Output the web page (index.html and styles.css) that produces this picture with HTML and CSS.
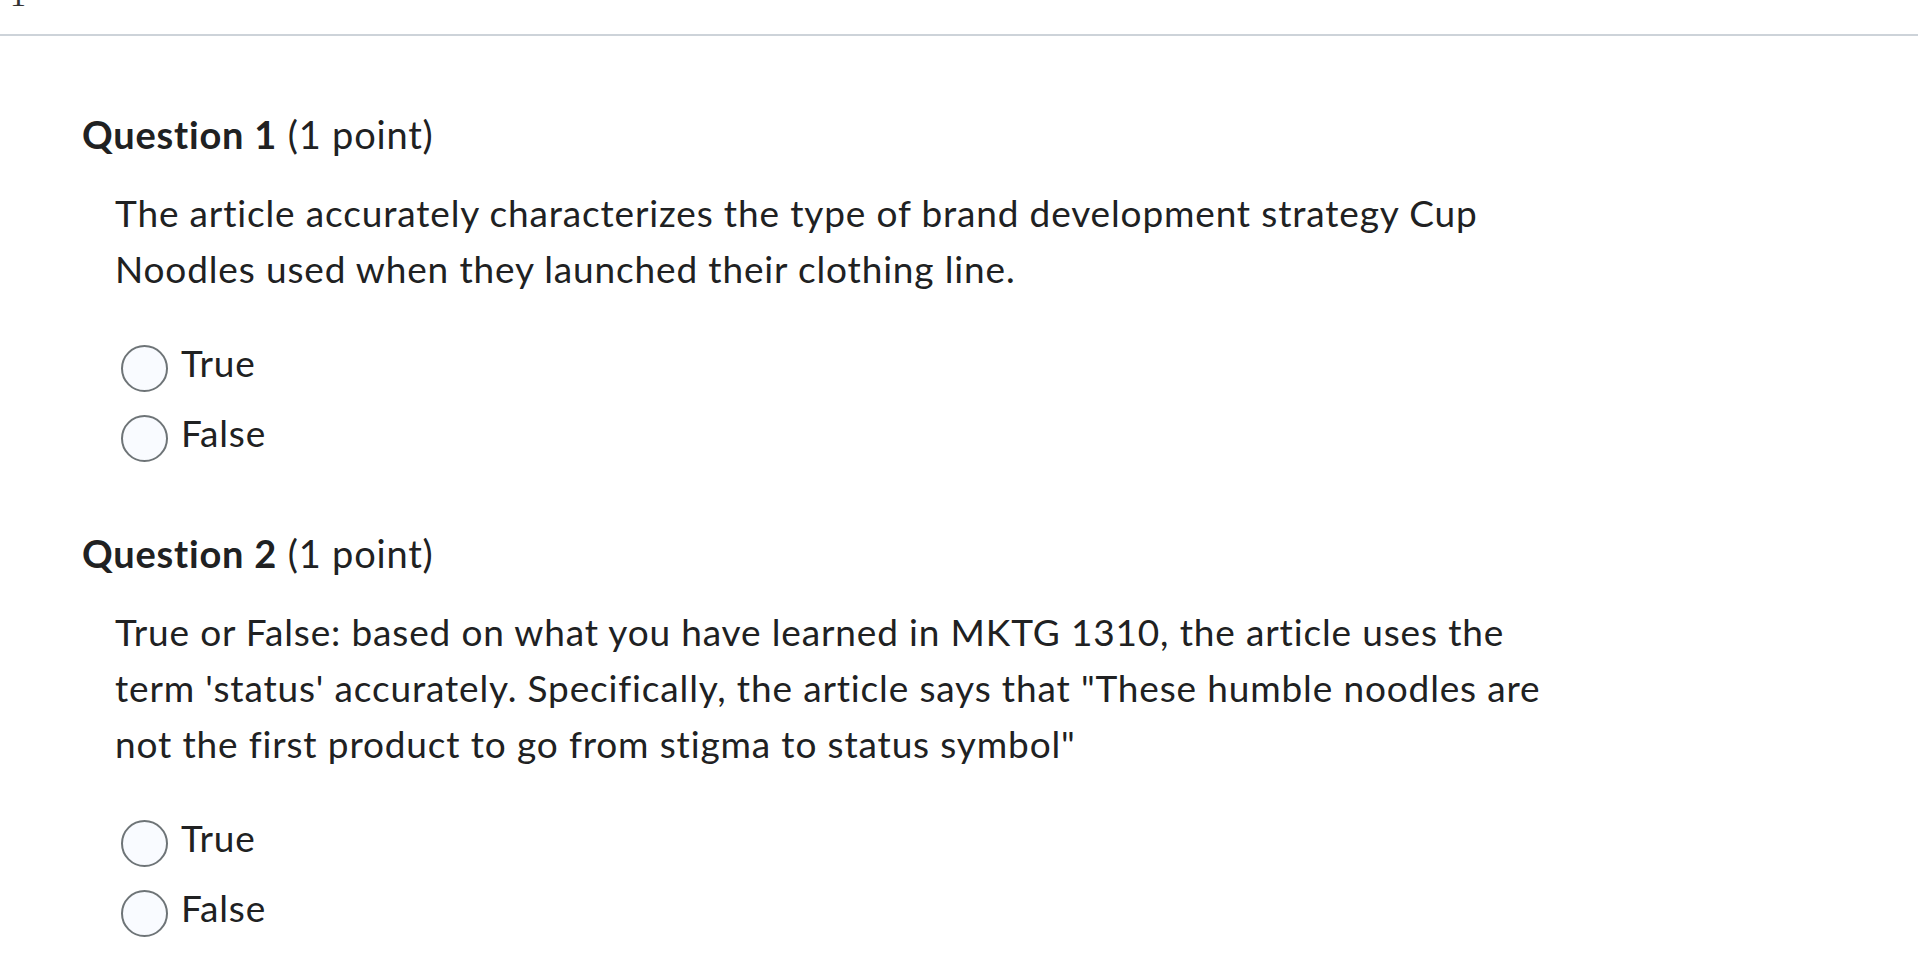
FILE: index.html
```html
<!DOCTYPE html>
<html lang="en">
<head>
<meta charset="utf-8">
<title>Quiz</title>
<link rel="stylesheet" href="styles.css">
</head>
<body>
<div class="topbar"><span class="page-num">1</span></div>
<main class="quiz">
  <section class="question">
    <h2 class="q-title"><strong>Question 1</strong> (1 point)</h2>
    <div class="q-body">
      <p class="q-text">The article accurately characterizes the type of brand development strategy Cup Noodles used when they launched their clothing line.</p>
      <div class="options">
        <label class="opt"><input type="radio" name="q1" class="radio"><span>True</span></label>
        <label class="opt"><input type="radio" name="q1" class="radio"><span>False</span></label>
      </div>
    </div>
  </section>
  <section class="question">
    <h2 class="q-title"><strong>Question 2</strong> (1 point)</h2>
    <div class="q-body">
      <p class="q-text">True or False: based on what you have learned in MKTG 1310, the article uses the term 'status' accurately. Specifically, the article says that "These humble noodles are not the first product to go from stigma to status symbol"</p>
      <div class="options">
        <label class="opt"><input type="radio" name="q2" class="radio"><span>True</span></label>
        <label class="opt"><input type="radio" name="q2" class="radio"><span>False</span></label>
      </div>
    </div>
  </section>
</main>
</body>
</html>
```
FILE: styles.css
```css
html, body {
  margin: 0;
  padding: 0;
  background: #ffffff;
}
body {
  font-family: Lato, "Open Sans", sans-serif;
  color: #202122;
  overflow: hidden;
}
.topbar {
  height: 34px;
  border-bottom: 2px solid #cdd3d9;
  overflow: hidden;
}
.page-num {
  display: block;
  font-family: "Liberation Serif", serif;
  font-size: 32px;
  line-height: 32px;
  margin-top: -21px;
  padding-left: 10px;
  color: #333;
}
.quiz {
  padding-left: 82px;
  padding-top: 77px;
}
.question {
  margin-bottom: 70px;
}
.q-title {
  margin: 0;
  font-size: 38px;
  line-height: 42px;
  font-weight: 400;
  letter-spacing: 0.8px;
}
.q-title strong {
  font-weight: 700;
}
.q-body {
  padding-left: 33px;
  padding-top: 30px;
  width: 1460px;
}
.q-text {
  margin: 0;
  font-size: 37px;
  line-height: 56px;
  letter-spacing: 0.85px;
}
.options {
  padding-top: 38px;
  display: flex;
  flex-direction: column;
  gap: 13px;
}
.opt {
  display: flex;
  align-items: flex-start;
  font-size: 37px;
  line-height: 56px;
  letter-spacing: 0.8px;
}
.radio {
  appearance: none;
  -webkit-appearance: none;
  box-sizing: border-box;
  width: 47px;
  height: 47px;
  margin: 10px 13px 0 6px;
  border: 2px solid #6e7477;
  border-radius: 50%;
  background: #f9fbff;
  flex: none;
}
```
